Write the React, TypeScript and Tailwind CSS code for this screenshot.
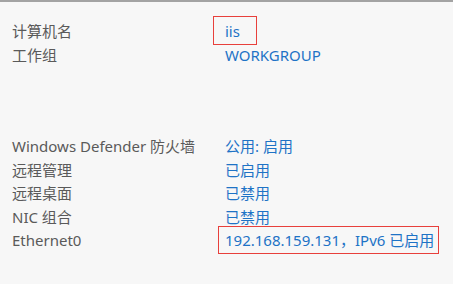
const rows: { label: string; value: string; box?: 'iis' | 'eth' }[] = [
  { label: '计算机名', value: 'iis', box: 'iis' },
  { label: '工作组', value: 'WORKGROUP' },
]

const rows2: { label: string; value: string; box?: 'iis' | 'eth' }[] = [
  { label: 'Windows Defender 防火墙', value: '公用: 启用' },
  { label: '远程管理', value: '已启用' },
  { label: '远程桌面', value: '已禁用' },
  { label: 'NIC 组合', value: '已禁用' },
  { label: 'Ethernet0', value: '192.168.159.131，IPv6 已启用', box: 'eth' },
]

function Row({ label, value, box }: { label: string; value: string; box?: 'iis' | 'eth' }) {
  return (
    <>
      <div className="text-[#5a5a5a]">{label}</div>
      <div className="text-[#1e73c6]">
        <span className="relative">
          {value}
          {box === 'iis' && (
            <span className="absolute -left-3 -right-[17px] -top-[5px] -bottom-[4px] border border-[#e8403c]" />
          )}
          {box === 'eth' && (
            <span className="absolute -left-[7px] -right-[5px] -top-[4px] -bottom-[4px] border border-[#e8403c]" />
          )}
        </span>
      </div>
    </>
  )
}

export default function App() {
  return (
    <div
      className="h-[284px] w-[453px] overflow-hidden border-t-2 border-[#a3a3a3] bg-[#f7f7f7] px-3 pt-[18px] text-[15px] leading-[23.5px]"
      style={{ fontFamily: '"Noto Sans", "Noto Sans CJK SC", sans-serif' }}
    >
      <div className="grid grid-cols-[213px_1fr]">
        {rows.map((r) => (
          <Row key={r.label} {...r} />
        ))}
      </div>
      <div className="mt-[68px] grid grid-cols-[213px_1fr]">
        {rows2.map((r) => (
          <Row key={r.label} {...r} />
        ))}
      </div>
    </div>
  )
}
